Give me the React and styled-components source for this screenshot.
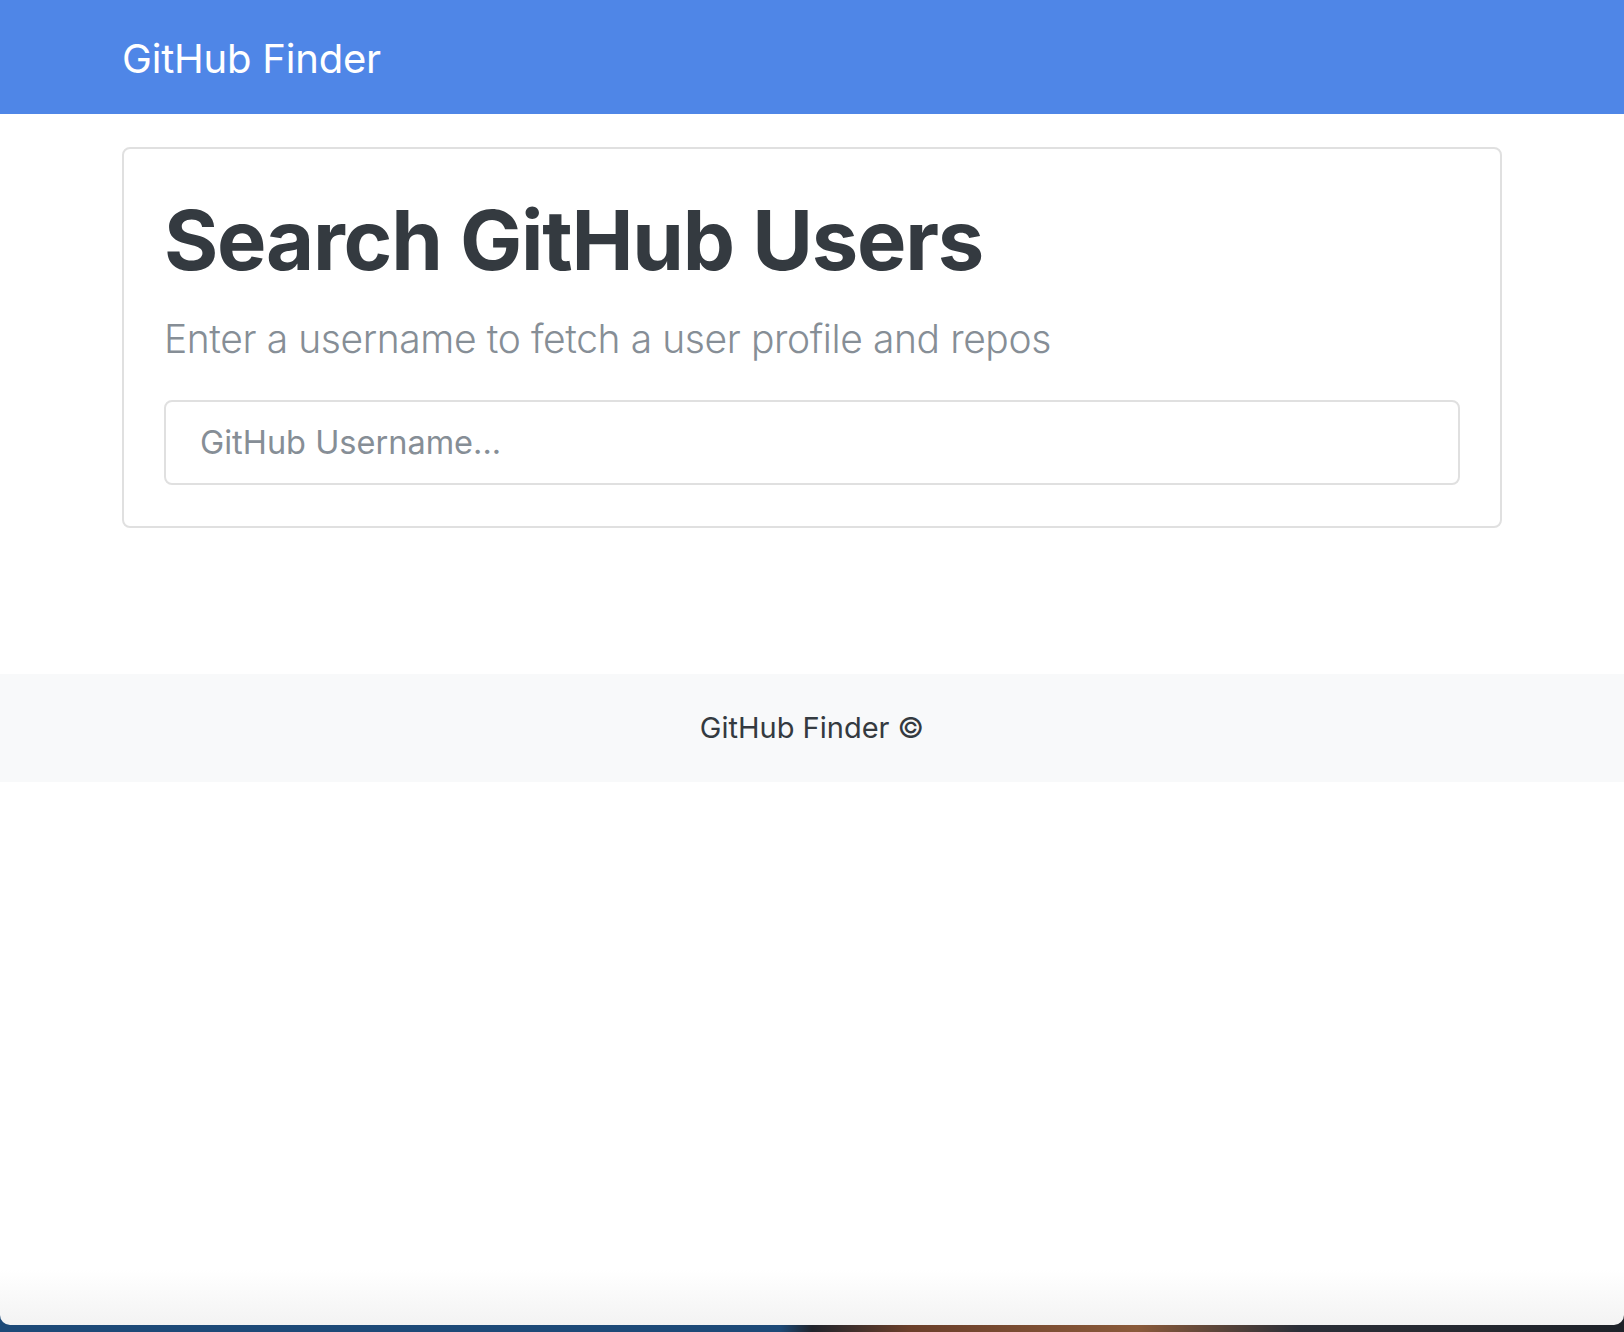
import React from "react";
import styled, { createGlobalStyle } from "styled-components";

const GlobalStyle = createGlobalStyle`
	* {
		box-sizing: border-box;
	}
	body {
		margin: 0;
		font-family: Inter, "Open Sans", Roboto, sans-serif;
		background: linear-gradient(
			to right,
			#1d4a78 0%,
			#1d4a78 48%,
			#20242c 50%,
			#6b3f2a 56%,
			#8a5a3a 70%,
			#2b2f38 80%,
			#1e2229 100%
		);
	}
`;

function App() {
	return (
		<>
			<GlobalStyle />
			<Page>
				<Navbar>
					<Container>
						<Brand>GitHub Finder</Brand>
					</Container>
				</Navbar>

				<Main>
					<Container>
						<Card>
							<Heading>Search GitHub Users</Heading>
							<Lead>
								Enter a username to fetch a user profile and repos
							</Lead>
							<SearchInput
								type="text"
								placeholder="GitHub Username..."
							/>
						</Card>
					</Container>
				</Main>

				<Footer>
					<FooterText>GitHub Finder ©</FooterText>
				</Footer>
			</Page>
		</>
	);
}

export default App;

const Page = styled.div`
	min-height: 1325px;
	background: linear-gradient(
		to bottom,
		#ffffff 0,
		#ffffff 1270px,
		#f3f3f3 1325px
	);
	border-radius: 0 0 10px 10px;
	overflow: hidden;
`;

const Container = styled.div`
	width: 1380px;
	margin: 0 auto;
`;

const Navbar = styled.nav`
	height: 114px;
	background-color: #4f86e7;
	display: flex;
	align-items: center;
`;

const Brand = styled.a`
	display: inline-block;
	color: #fff;
	font-size: 40px;
	line-height: 1;
	letter-spacing: -0.2px;
	padding-top: 3px;
`;

const Main = styled.main`
	padding-top: 33px;
	padding-bottom: 146px;
`;

const Card = styled.section`
	border: 2px solid #e0e0e0;
	border-radius: 8px;
	padding: 40px;
	height: 381px;
`;

const Heading = styled.h1`
	margin: 2px 0 0;
	font-size: 83px;
	font-weight: 700;
	line-height: 1.2;
	color: #343a40;
	letter-spacing: -1.25px;
`;

const Lead = styled.p`
	margin: 25px 0 0;
	font-size: 39px;
	font-weight: 300;
	line-height: 1.2;
	color: #868e96;
	letter-spacing: -0.4px;
`;

const SearchInput = styled.input`
	display: block;
	width: 100%;
	height: 85px;
	margin-top: 38px;
	padding: 0 34px;
	border: 2px solid #e0e0e0;
	border-radius: 8px;
	font-family: Inter, "Open Sans", Roboto, sans-serif;
	font-size: 32.5px;
	color: #495057;
	outline: none;
	&::placeholder {
		color: #868e96;
	}
`;

const Footer = styled.footer`
	height: 108px;
	background-color: #f8f9fa;
	display: flex;
	align-items: center;
	justify-content: center;
`;

const FooterText = styled.span`
	font-size: 29px;
	color: #343a40;
	padding-bottom: 2px;
`;
